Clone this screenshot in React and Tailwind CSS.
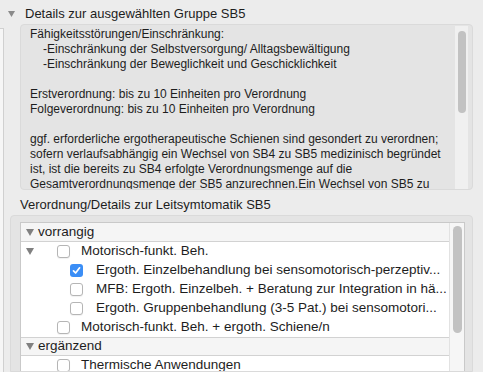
import React from 'react';

const Tri = ({ size = 'sm' }) =>
    size === 'sm' ? (
        <svg width="8" height="7" viewBox="0 0 8 7"><polygon points="0,0 8,0 4,7" fill="#808080" /></svg>
    ) : (
        <svg width="7" height="6" viewBox="0 0 7 6"><polygon points="0,0 7,0 3.5,6" fill="#8a8a8a" /></svg>
    );

const Check = ({ checked }) =>
    checked ? (
        <span className="w-[13px] h-[13px] shrink-0 rounded-[3px] bg-[#3b8ef6] flex items-center justify-center">
            <svg width="11" height="11" viewBox="0 0 11 11">
                <path d="M2.5 5.8 L4.6 8 L8.6 2.8" stroke="white" strokeWidth="1.7" fill="none" strokeLinecap="round" strokeLinejoin="round" />
            </svg>
        </span>
    ) : (
        <span className="w-[13px] h-[13px] shrink-0 rounded-[3px] bg-white border border-[#b5b5b5] shadow-[0_1px_1px_rgba(0,0,0,0.06)]" />
    );

const Group = ({ label, first }) => (
    <div className={`h-[19px] shrink-0 flex items-center bg-[#f5f5f5] border-b border-[#d2d2d2] ${first ? '' : 'border-t'}`}>
        <div className="w-[17px] pl-[5px] flex items-center"><Tri /></div>
        <span>{label}</span>
    </div>
);

const Item = ({ label, level = 1, tri, checked }) => (
    <div className="h-[19px] shrink-0 flex items-center bg-white whitespace-nowrap overflow-hidden">
        <div className="w-[36px] shrink-0 pl-[5px] flex items-center">{tri && <Tri />}</div>
        {level === 2 && <div className="w-[13px] shrink-0" />}
        <Check checked={checked} />
        <span className={level === 2 ? 'ml-[13px]' : 'ml-[11px]'}>{label}</span>
    </div>
);

export default function App() {
    return (
        <div className="w-[483px] h-[372px] overflow-hidden bg-[#ececec] flex font-['Liberation_Sans',Arial,sans-serif] text-[#1d1d1d]">
            {/* sliver of neighbouring view */}
            <div className="w-[4px] shrink-0 mt-[28px] bg-[#f6f6f6] border-r border-t border-[#d0d0d0]" />

            <div className="flex-1 flex flex-col min-h-0">
                {/* Header */}
                <div className="mt-[4px] h-[20px] shrink-0 flex items-center pl-[4px] text-[13px]">
                    <Tri size="lg" />
                    <span className="ml-[10px]">Details zur ausgewählten Gruppe SB5</span>
                </div>

                {/* Details text box */}
                <div className="ml-[16px] w-[453px] h-[166px] shrink-0 bg-[#e4e4e4] border border-[#dadada] rounded-[4px] flex overflow-hidden">
                    <div className="flex-1 pl-[9px] pt-[2px] text-[12px] leading-[15px] whitespace-nowrap overflow-hidden">
                        <div>Fähigkeitsstörungen/Einschränkung:</div>
                        <div className="pl-[13px]">-Einschränkung der Selbstversorgung/ Alltagsbewältigung</div>
                        <div className="pl-[13px]">-Einschränkung der Beweglichkeit und Geschicklichkeit</div>
                        <div className="h-[15px]" />
                        <div>Erstverordnung: bis zu 10 Einheiten pro Verordnung</div>
                        <div>Folgeverordnung: bis zu 10 Einheiten pro Verordnung</div>
                        <div className="h-[15px]" />
                        <div>ggf. erforderliche ergotherapeutische Schienen sind gesondert zu verordnen;</div>
                        <div>sofern verlaufsabhängig ein Wechsel von SB4 zu SB5 medizinisch begründet</div>
                        <div>ist, ist die bereits zu SB4 erfolgte Verordnungsmenge auf die</div>
                        <div>Gesamtverordnungsmenge der SB5 anzurechnen.Ein Wechsel von SB5 zu</div>
                    </div>
                    <div className="w-[13px] mr-[4px] mt-[1px] bg-[#f0f0f0] flex justify-center">
                        <div className="w-[8px] h-[82px] mt-[5px] rounded-full bg-[#c2c2c2]" />
                    </div>
                </div>

                {/* Section 2 header */}
                <div className="mt-[6px] h-[18px] shrink-0 flex items-center pl-[16px] text-[13px]">
                    Verordnung/Details zur Leitsymtomatik SB5
                </div>

                {/* Outline box */}
                <div className="ml-[6px] w-[463px] flex-1 min-h-0 mt-[1px] bg-[#e4e4e4] border border-[#dadada] rounded-t-[4px] pt-[6px] pl-[9px] pr-[7px]">
                    <div className="h-full flex border border-b-0 border-[#c9c9c9] text-[13.5px]">
                        <div className="flex-1 flex flex-col overflow-hidden">
                            <Group label="vorrangig" first />
                            <Item label="Motorisch-funkt. Beh." tri />
                            <Item label="Ergoth. Einzelbehandlung bei sensomotorisch-perzeptiv..." level={2} checked />
                            <Item label="MFB: Ergoth. Einzelbeh. + Beratung zur Integration in hä..." level={2} />
                            <Item label="Ergoth. Gruppenbehandlung (3-5 Pat.) bei sensomotori..." level={2} />
                            <Item label="Motorisch-funkt. Beh. + ergoth. Schiene/n" />
                            <Group label="ergänzend" />
                            <Item label="Thermische Anwendungen" />
                        </div>
                        <div className="w-[15px] bg-[#f6f6f6] border-l border-[#e2e2e2] flex justify-center">
                            <div className="w-[9px] h-[107px] mt-[3px] rounded-full bg-[#c2c2c2]" />
                        </div>
                    </div>
                </div>
            </div>
        </div>
    );
}
